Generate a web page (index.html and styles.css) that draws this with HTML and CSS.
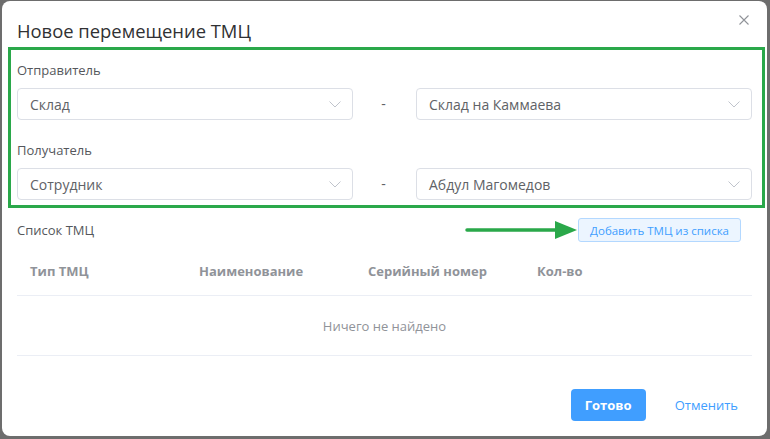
FILE: index.html
```html
<!DOCTYPE html>
<html lang="ru">
<head>
  <meta charset="UTF-8">
  <title>Новое перемещение ТМЦ</title>
  <link rel="stylesheet" href="styles.css">
</head>
<body>

<div class="modal">
  <div class="modal-header">
    <div class="modal-title">Новое перемещение ТМЦ</div>
    <button class="close-btn" aria-label="Закрыть">
      <svg width="10" height="10" viewBox="0 0 10 10"><path d="M0.5 0.5L9.5 9.5M9.5 0.5L0.5 9.5" stroke="#909399" stroke-width="1.1" fill="none"/></svg>
    </button>
  </div>

  <div class="route-box">
    <div class="field-label">Отправитель</div>
    <div class="route-row">
      <div class="select">
        <span>Склад</span>
        <svg class="chevron" width="12" height="7" viewBox="0 0 12 7"><path d="M0.5 0.5L6 6L11.5 0.5" stroke="#c0c4cc" stroke-width="1" fill="none"/></svg>
      </div>
      <div class="dash">-</div>
      <div class="select">
        <span>Склад на Каммаева</span>
        <svg class="chevron" width="12" height="7" viewBox="0 0 12 7"><path d="M0.5 0.5L6 6L11.5 0.5" stroke="#c0c4cc" stroke-width="1" fill="none"/></svg>
      </div>
    </div>

    <div class="field-label second">Получатель</div>
    <div class="route-row">
      <div class="select">
        <span>Сотрудник</span>
        <svg class="chevron" width="12" height="7" viewBox="0 0 12 7"><path d="M0.5 0.5L6 6L11.5 0.5" stroke="#c0c4cc" stroke-width="1" fill="none"/></svg>
      </div>
      <div class="dash">-</div>
      <div class="select">
        <span>Абдул Магомедов</span>
        <svg class="chevron" width="12" height="7" viewBox="0 0 12 7"><path d="M0.5 0.5L6 6L11.5 0.5" stroke="#c0c4cc" stroke-width="1" fill="none"/></svg>
      </div>
    </div>
  </div>

  <div class="list-bar">
    <div class="list-title">Список ТМЦ</div>
    <svg class="arrow" width="112" height="18" viewBox="0 0 112 18"><path d="M2 9H92" stroke="#2aa84a" stroke-width="3.5" stroke-linecap="round"/><path d="M90 0L112 9L90 18Z" fill="#2aa84a"/></svg>
    <button class="add-btn">Добавить ТМЦ из списка</button>
  </div>

  <div class="table">
    <div class="table-head">
      <div class="cell">Тип ТМЦ</div>
      <div class="cell">Наименование</div>
      <div class="cell">Серийный номер</div>
      <div class="cell">Кол-во</div>
    </div>
    <div class="table-empty">Ничего не найдено</div>
  </div>

  <div class="modal-footer">
    <button class="btn-primary">Готово</button>
    <button class="btn-text">Отменить</button>
  </div>
</div>

</body>
</html>
```

FILE: styles.css
```css
* {
  margin: 0;
  padding: 0;
  box-sizing: border-box;
  font-family: 'Open Sans', 'Liberation Sans', sans-serif;
}

body {
  background-color: #6d6d6d;
  padding: 1px 3px 3px 2px;
  height: 100vh;
}

button {
  border: none;
  background: none;
  cursor: pointer;
}

.modal {
  background-color: #fff;
  border-radius: 8px;
  height: 435px;
  padding: 18px 15px 15px 15px;
  display: flex;
  flex-direction: column;
}

.modal-header {
  display: flex;
  justify-content: space-between;
  align-items: center;
  height: 24px;
}

.modal-title {
  font-size: 18.4px;
  line-height: 24px;
  color: #303133;
}

.close-btn {
  width: 10px;
  height: 10px;
  margin: -22px 3px 0 0;
  display: flex;
}

/* green annotation frame around the sender / receiver block */
.route-box {
  border: 3px solid #2aa84a;
  margin: 4px -13px 0 -9px;
  padding: 10px 10px 5px 6px;
}

.field-label {
  font-size: 13px;
  line-height: 20px;
  color: #55575c;
  margin-bottom: 8px;
}

.field-label.second {
  margin-top: 20px;
}

.route-row {
  display: grid;
  grid-template-columns: 1fr 63px 1fr;
}

.select {
  height: 32px;
  border: 1px solid #dcdfe6;
  border-radius: 4px;
  padding: 0 11px 0 12px;
  display: flex;
  align-items: center;
  justify-content: space-between;
  font-size: 14px;
  color: #606266;
}

.chevron {
  margin-top: 1px;
}

.dash {
  text-align: center;
  color: #606266;
  font-size: 14px;
  line-height: 32px;
  padding-right: 2px;
}

.list-bar {
  display: flex;
  align-items: center;
  margin-top: 10px;
  height: 24px;
}

.list-title {
  flex: 1;
  font-size: 13px;
  color: #55575c;
}

.arrow {
  margin-right: 1px;
}

.add-btn {
  height: 24px;
  padding: 0 11px;
  margin-right: 11px;
  background-color: #ecf5ff;
  border: 1px solid #b3d8ff;
  border-radius: 3px;
  color: #409eff;
  font-size: 11.5px;
}

.table {
  margin-top: 5px;
}

.table-head {
  display: grid;
  grid-template-columns: 169px 169px 169px 1fr;
  height: 49px;
  align-items: center;
  border-bottom: 1px solid #ebeef5;
}

.cell {
  padding-left: 13px;
  font-size: 13px;
  font-weight: 700;
  color: #909399;
}

.table-empty {
  height: 60px;
  line-height: 60px;
  text-align: center;
  font-size: 13px;
  color: #909399;
  border-bottom: 1px solid #ebeef5;
}

.modal-footer {
  margin-top: auto;
  display: flex;
  justify-content: flex-end;
  gap: 15px;
}

.btn-primary {
  width: 75px;
  height: 32px;
  border-radius: 4px;
  background-color: #409eff;
  color: #fff;
  font-size: 13px;
  font-weight: 700;
}

.btn-text {
  height: 32px;
  padding: 0 14px;
  color: #409eff;
  font-size: 13px;
}
```
